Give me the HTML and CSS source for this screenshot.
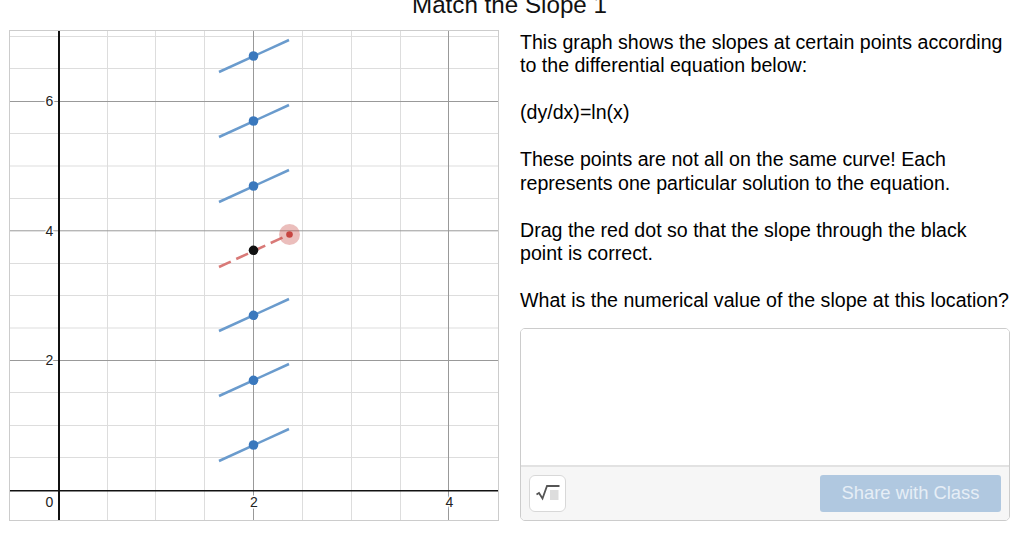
FILE: index.html
```html
<!DOCTYPE html>
<html lang="en">
<head>
    <meta charset="UTF-8">
    <meta name="viewport" content="width=device-width, initial-scale=1.0">
    <title>Match the Slope 1</title>
    <link rel="stylesheet" href="styles.css">
</head>
<body>
    <h1 class="title">Match the Slope 1</h1>
    <div class="container">
        <div class="graph">
            <svg class="graph-svg" width="490" height="491" viewBox="9 30 490 491">
                <!-- minor grid -->
                <g class="grid-minor">
                    <path d="M107.5 30V521M155.5 30V521M204.5 30V521M302.5 30V521M351.5 30V521M400.5 30V521"/>
                    <path d="M9 36.500H499M9 68.500H499M9 133.500H499M9 166H499M9 198.500H499M9 263.500H499M9 295.500H499M9 328H499M9 392.500H499M9 425.500H499M9 457.500H499"/>
                </g>
                <!-- major grid -->
                <g class="grid-major">
                    <path d="M253.5 30V521M448.5 30V521"/>
                    <path d="M9 101.500H499M9 230.800H499M9 360.500H499"/>
                </g>
                <!-- axes -->
                <path class="axis-y" d="M59 30V521"/>
                <path class="axis-x" d="M9 490.800H499"/>
                <g class="ticks">
                    <text x="49.500" y="106">6</text>
                    <text x="49.500" y="235.500">4</text>
                    <text x="49.500" y="365">2</text>
                    <text x="49.500" y="507">0</text>
                    <text x="254" y="507">2</text>
                    <text x="449.500" y="507">4</text>
                </g>
                <rect class="graph-frame" x="9.500" y="30.500" width="489" height="490"/>
                <!-- slope segments -->
                <g class="slopes">
                    <path d="M219 72L289 40"/>
                    <path d="M219 137L289 105"/>
                    <path d="M219 202L289 170"/>
                    <path d="M219 331L289 299"/>
                    <path d="M219 396L289 364"/>
                    <path d="M219 461L289 429"/>
                </g>
                <g class="dots">
                    <circle cx="253.500" cy="56" r="4.800"/>
                    <circle cx="253.500" cy="121" r="4.800"/>
                    <circle cx="253.500" cy="186" r="4.800"/>
                    <circle cx="253.500" cy="315.300" r="4.800"/>
                    <circle cx="253.500" cy="380.300" r="4.800"/>
                    <circle cx="253.500" cy="445" r="4.800"/>
                </g>
                <!-- draggable slope -->
                <path class="slope-drag" d="M219 267L289 234.500"/>
                <circle class="dot-black" cx="253.500" cy="250.300" r="4.800"/>
                <circle class="handle-halo" cx="289.500" cy="234.500" r="10.500"/>
                <circle class="handle-dot" cx="289.500" cy="234.500" r="3.300"/>
            </svg>
        </div>
        <div class="side">
            <p>This graph shows the slopes at certain points according to the differential equation below:</p>
            <p>(dy/dx)=ln(x)</p>
            <p>These points are not all on the same curve! Each represents one particular solution to the equation.</p>
            <p>Drag the red dot so that the slope through the black point is correct.</p>
            <p>What is the numerical value of the slope at this location?</p>
            <div class="response">
                <div class="response-input"></div>
                <div class="response-bar">
                    <div class="math-btn">
                        <svg width="24" height="16" viewBox="0 0 24 16">
                            <path class="radical" d="M0.500 9.500L3 8L6.500 13.500L11 1H23.500"/>
                            <rect class="radical-box" x="14" y="5" width="8.500" height="10"/>
                        </svg>
                    </div>
                    <button class="share-btn" disabled>Share with Class</button>
                </div>
            </div>
        </div>
    </div>
</body>
</html>
```

FILE: styles.css
```css
html, body {
    height: 535px;
    overflow: hidden;
}
body {
    font-family: "Liberation Sans", Arial, sans-serif;
    background-color: #ffffff;
    color: #000000;
    margin: 0;
}
.title {
    font-size: 24.200px;
    font-weight: 400;
    line-height: 26px;
    text-align: center;
    width: 1019px;
    margin: -8px 0 0 0;
    color: #111111;
}
.container {
    display: flex;
    align-items: flex-start;
    gap: 21px;
    margin: 12px 0 0 9px;
}
.graph {
    flex: none;
    width: 490px;
    height: 491px;
}
.graph-svg {
    display: block;
}
.graph-frame {
    fill: none;
    stroke: #cccccc;
    stroke-width: 1;
}
.grid-minor path {
    fill: none;
    stroke: #dddddd;
    stroke-width: 1;
}
.grid-major path {
    fill: none;
    stroke: #999999;
    stroke-width: 1;
}
.axis-y {
    stroke: #111111;
    stroke-width: 2;
}
.axis-x {
    stroke: #111111;
    stroke-width: 1.500;
}
.ticks text {
    font-size: 14px;
    text-anchor: middle;
    fill: #222222;
    stroke: #ffffff;
    stroke-width: 3px;
    paint-order: stroke;
}
.slopes path {
    fill: none;
    stroke: #6a9bcd;
    stroke-width: 2.500;
}
.dots circle {
    fill: #3a78bd;
}
.slope-drag {
    fill: none;
    stroke: #d97a78;
    stroke-width: 2.500;
    stroke-dasharray: 13 6;
}
.dot-black {
    fill: #111111;
}
.handle-halo {
    fill: #c74440;
    fill-opacity: 0.35;
}
.handle-dot {
    fill: #c74440;
}
.side {
    flex: none;
    width: 490px;
    padding-top: 0.600px;
}
.side p {
    font-size: 19.600px;
    line-height: 23.520px;
    margin: 0 0 23.520px 0;
}
.response {
    width: 490px;
    height: 193px;
    margin-top: -8.360px;
    box-sizing: border-box;
    border: 1px solid #cccccc;
    border-radius: 5px;
    display: flex;
    flex-direction: column;
    overflow: hidden;
}
.response-input {
    flex: 1;
    background: #ffffff;
}
.response-bar {
    height: 55px;
    flex: none;
    box-sizing: border-box;
    border-top: 2px solid #e2e2e2;
    background-color: #f6f6f6;
    display: flex;
    justify-content: space-between;
    align-items: flex-start;
    padding: 8px 8px 0 8px;
}
.math-btn {
    width: 37px;
    height: 37px;
    box-sizing: border-box;
    background: #ffffff;
    border: 1px solid #d8d8d8;
    border-radius: 6px;
    display: flex;
    align-items: center;
    justify-content: center;
}
.radical {
    fill: none;
    stroke: #555555;
    stroke-width: 1.800;
}
.radical-box {
    fill: #dddddd;
}
.share-btn {
    width: 181px;
    height: 37px;
    border: none;
    border-radius: 3px;
    background-color: #b0c8e0;
    color: #e6eef6;
    font-family: inherit;
    font-size: 18.400px;
    padding: 0;
}
```
